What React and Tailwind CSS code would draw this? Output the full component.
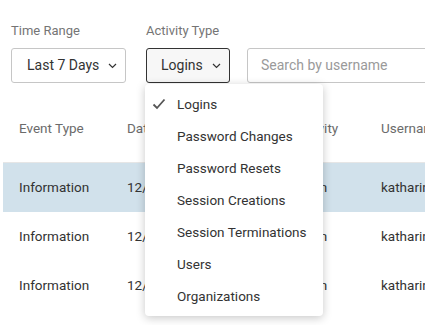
import React from "react";

const Chevron = () => (
  <svg width="9" height="6" viewBox="0 0 9 6" className="ml-[9px]" fill="none">
    <path d="M1 1l3.5 3.5L8 1" stroke="#333" strokeWidth="1.2" />
  </svg>
);

const items = [
  "Logins",
  "Password Changes",
  "Password Resets",
  "Session Creations",
  "Session Terminations",
  "Users",
  "Organizations",
];

export default function App() {
  const rows = [true, false, false];
  return (
    <div className="relative w-[425px] h-[325px] overflow-hidden bg-white text-[#333]" style={{ fontFamily: "Roboto, 'Liberation Sans', sans-serif" }}>
      <div className="flex pt-[22px] pl-[11px]">
        <div className="flex flex-col">
          <div className="text-[13px] leading-[18px] text-[#757575] h-[26px]">Time Range</div>
          <div className="flex items-center h-[35px] w-[115px] border border-[#c6c6c6] rounded-[3px] pl-[15px] text-[14px]">
            Last 7 Days
            <Chevron />
          </div>
        </div>
        <div className="flex flex-col ml-[20px]">
          <div className="text-[13px] leading-[18px] text-[#757575] h-[26px]">Activity Type</div>
          <div className="flex items-center h-[35px] w-[84px] border border-[#333] bg-[#f7f7f7] rounded-[3px] pl-[14px] text-[14px]">
            Logins
            <Chevron />
          </div>
        </div>
        <div className="flex flex-col ml-[17px]">
          <div className="h-[26px]" />
          <div className="flex items-center h-[35px] w-[200px] border border-[#c6c6c6] rounded-[3px] pl-[13px] text-[14px] text-[#9a9a9a]">
            Search by username
          </div>
        </div>
      </div>

      <div className="ml-[3px] mt-[12px] w-[500px] text-[13.5px]">
        <div className="flex items-center h-[68px] text-[#6b6b6b] border-b border-[#e6e6e6]">
          <div className="w-[124px] pl-[16px]">Event Type</div>
          <div className="w-[167px]">Date</div>
          <div className="w-[87px]">Activity</div>
          <div>Username</div>
        </div>
        {rows.map((hl, i) => (
          <div key={i} className={`flex items-center h-[49px] ${hl ? "bg-[#d1e1eb]" : ""}`}>
            <div className="w-[124px] pl-[16px]">Information</div>
            <div className="w-[167px]">12/07/2023</div>
            <div className="w-[87px]">Login</div>
            <div>katharine</div>
          </div>
        ))}
      </div>

      <div className="absolute left-[145px] top-[84px] w-[178px] h-[232px] bg-white rounded-[4px] shadow-[0_2px_10px_rgba(0,0,0,0.22)] py-[4px]">
        {items.map((it, i) => (
          <div key={it} className="relative flex items-center h-[32px] pl-[32px] text-[13.5px] text-[#333]">
            {i === 0 && (
              <svg className="absolute left-[7px]" width="14" height="12" viewBox="0 0 14 12" fill="none">
                <path d="M1.5 6.5l3.5 3.5L12.5 1.5" stroke="#555" strokeWidth="1.8" />
              </svg>
            )}
            {it}
          </div>
        ))}
      </div>
    </div>
  );
}
